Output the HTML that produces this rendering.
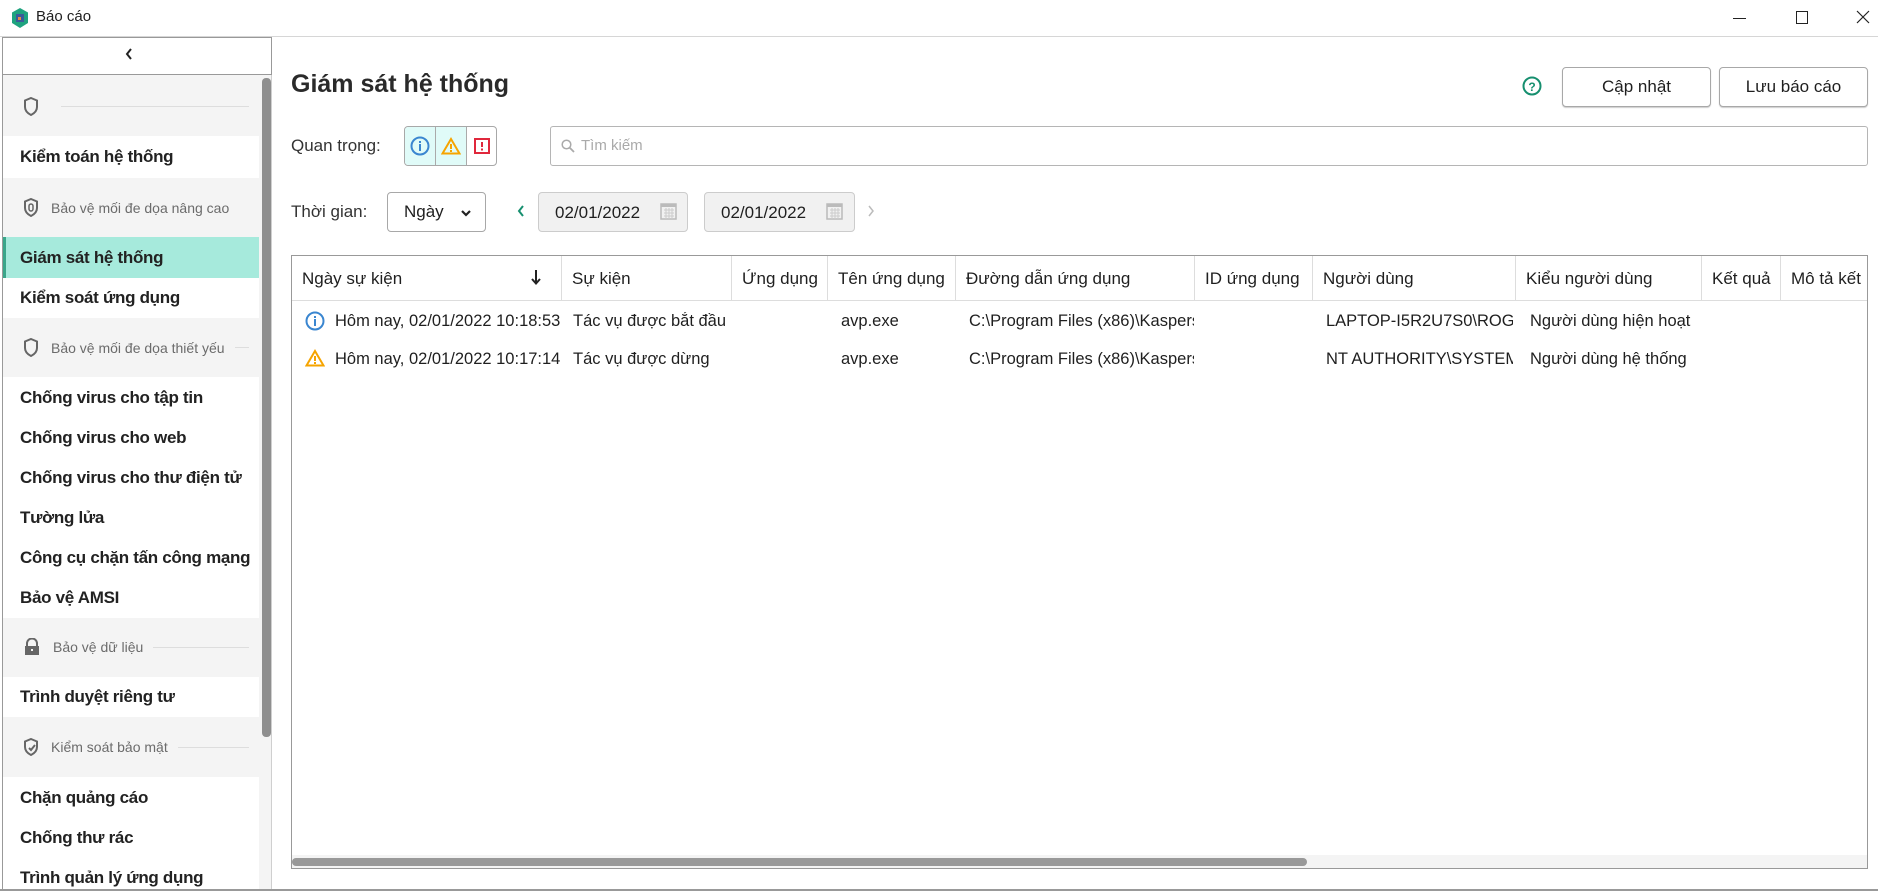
<!DOCTYPE html>
<html><head><meta charset="utf-8"><style>
*{box-sizing:border-box;margin:0;padding:0}
body{width:1878px;height:891px;overflow:hidden;background:#fff;font-family:"Liberation Sans",sans-serif;color:#1f1f1f;position:relative}
.abs{position:absolute}
.tb{left:0;top:0;width:1878px;height:37px;border-bottom:1px solid #d6d6d6;background:#fff}
.side{left:2px;top:37px;width:270px;height:852px;background:#f4f4f4;border-right:1px solid #cfcfcf;border-left:1px solid #999}
.collapse{left:2px;top:37px;width:270px;height:38px;background:#fff;border:1px solid #999}
.item{position:absolute;left:3px;width:256px;background:#fff;font-size:17px;letter-spacing:-0.3px;font-weight:bold;padding-left:17px;display:flex;align-items:center;color:#222;white-space:nowrap;overflow:hidden}
.t{position:absolute;left:20px;font-size:17px;letter-spacing:-0.3px;font-weight:bold;color:#222;white-space:nowrap;line-height:20px}
.grp{position:absolute;left:3px;width:256px;display:flex;align-items:center;padding-left:20px;font-size:14px;color:#6b6b6b;white-space:nowrap}
.grp .ln{flex:1;height:1px;background:#ddd;margin:0 10px}
.grp svg{margin-right:12px;flex:none}
.btn{position:absolute;border:1px solid #a8a8a8;border-radius:4px;background:#fff;font-size:17px;display:flex;align-items:center;justify-content:center;box-shadow:0 1px 1px #ccc}
.lbl{position:absolute;font-size:17px;color:#333}
.th{position:absolute;top:256px;height:45px;display:flex;align-items:center;font-size:17px;padding-left:10px;border-left:1px solid #ddd;white-space:nowrap;overflow:hidden}
.td{position:absolute;font-size:16.5px;white-space:nowrap;overflow:hidden}
</style></head><body>
<div class="abs tb"></div>
<svg class="abs" style="left:11px;top:8px" width="18" height="20" viewBox="0 0 18 20"><path d="M9 0L17 4.5V15L9 20L1 15V4.5Z" fill="#1fa37f"/><rect x="5" y="6" width="8" height="8" fill="#3b5b9a"/><rect x="7" y="9" width="3" height="3" fill="#e84"/></svg>
<div class="abs" style="left:36px;top:8px;font-size:15px">Báo cáo</div>
<div class="abs" style="left:1733px;top:18px;width:13px;height:1px;background:#222"></div>
<div class="abs" style="left:1796px;top:11px;width:12px;height:13px;border:1.3px solid #222"></div>
<svg class="abs" style="left:1856px;top:10px" width="14" height="14"><path d="M1 1L13 13M13 1L1 13" stroke="#222" stroke-width="1.2"/></svg>

<div class="abs side"></div>
<div class="abs collapse"></div>
<svg class="abs" style="left:124px;top:47px" width="10" height="14"><path d="M7 2L3 7L7 12" stroke="#222" stroke-width="2" fill="none"/></svg>
<div class="abs" style="left:262px;top:78px;width:9px;height:659px;background:#8f8f8f;border-radius:4px"></div>

<div class="grp" style="top:76px;height:60px"><svg width="16" height="19" viewBox="0 0 16 19"><path d="M8 1L14 3.5V10C14 14 11 16.5 8 18C5 16.5 2 14 2 10V3.5Z" fill="none" stroke="#666" stroke-width="2"/></svg><span class="ln"></span></div>
<div class="item" style="top:136px;height:42px">Kiểm toán hệ thống</div>
<div class="grp" style="top:178px;height:59px"><svg width="16" height="19" viewBox="0 0 16 19"><path d="M8 1L14 3.5V10C14 14 11 16.5 8 18C5 16.5 2 14 2 10V3.5Z" fill="none" stroke="#666" stroke-width="2"/><rect x="6" y="6" width="4" height="7" rx="2" fill="none" stroke="#666" stroke-width="1.5"/></svg>Bảo vệ mối đe dọa nâng cao</div>
<div class="item" style="top:237px;height:41px;background:#a6eadc;border-left:3px solid #3aa68a;padding-left:14px">Giám sát hệ thống</div>
<div class="item" style="top:278px;height:40px">Kiểm soát ứng dụng</div>
<div class="grp" style="top:318px;height:59px"><svg width="16" height="19" viewBox="0 0 16 19"><path d="M8 1L14 3.5V10C14 14 11 16.5 8 18C5 16.5 2 14 2 10V3.5Z" fill="none" stroke="#666" stroke-width="2"/></svg>Bảo vệ mối đe dọa thiết yếu<span class="ln"></span></div>
<div class="abs" style="left:3px;top:377px;width:256px;height:241px;background:#fff"></div>
<div class="t" style="top:388px">Chống virus cho tập tin</div>
<div class="t" style="top:428px">Chống virus cho web</div>
<div class="t" style="top:468px">Chống virus cho thư điện tử</div>
<div class="t" style="top:508px">Tường lửa</div>
<div class="t" style="top:548px">Công cụ chặn tấn công mạng</div>
<div class="t" style="top:588px">Bảo vệ AMSI</div>
<div class="grp" style="top:617px;height:60px"><svg width="18" height="18" viewBox="0 0 18 18"><path d="M4 8V5.5a5 5 0 0 1 10 0V8" fill="none" stroke="#666" stroke-width="2"/><rect x="2" y="8" width="14" height="9" fill="#666"/><rect x="8" y="11" width="2" height="2" fill="#f4f4f4"/></svg>Bảo vệ dữ liệu<span class="ln"></span></div>
<div class="item" style="top:677px;height:40px">Trình duyệt riêng tư</div>
<div class="grp" style="top:717px;height:60px"><svg width="16" height="18" viewBox="0 0 16 18"><path d="M8 1L14 3.5V9C14 13 11 15.5 8 17C5 15.5 2 13 2 9V3.5Z" fill="none" stroke="#666" stroke-width="2"/><path d="M6 10L8 12L12 7" stroke="#666" stroke-width="2" fill="none"/></svg>Kiểm soát bảo mật<span class="ln"></span></div>
<div class="abs" style="left:3px;top:777px;width:256px;height:112px;background:#fff"></div>
<div class="t" style="top:788px">Chặn quảng cáo</div>
<div class="t" style="top:828px">Chống thư rác</div>
<div class="t" style="top:868px">Trình quản lý ứng dụng</div>

<div class="abs" style="left:291px;top:70px;font-size:25px;font-weight:bold;color:#2a2a2a">Giám sát hệ thống</div>
<svg class="abs" style="left:1522px;top:76px" width="20" height="20"><circle cx="10" cy="10" r="8.5" fill="none" stroke="#168f6f" stroke-width="2"/><text x="10" y="15" font-size="12" font-weight="bold" text-anchor="middle" fill="#168f6f" font-family="Liberation Sans">?</text></svg>
<div class="btn" style="left:1562px;top:67px;width:149px;height:40px">Cập nhật</div>
<div class="btn" style="left:1719px;top:67px;width:149px;height:40px">Lưu báo cáo</div>

<div class="lbl" style="left:291px;top:136px">Quan trọng:</div>
<div class="abs" style="left:404px;top:126px;width:93px;height:40px;border:1px solid #a8a8a8;border-radius:4px;display:flex;overflow:hidden">
<div style="width:31px;background:#e0fbf8;border-right:1px solid #aaa;display:flex;align-items:center;justify-content:center"><svg width="20" height="20"><circle cx="10" cy="10" r="8.5" fill="none" stroke="#3a86d0" stroke-width="2"/><rect x="9" y="8" width="2" height="7" fill="#3a86d0"/><rect x="9" y="5" width="2" height="2" fill="#3a86d0"/></svg></div>
<div style="width:31px;background:#e0fbf8;border-right:1px solid #aaa;display:flex;align-items:center;justify-content:center"><svg width="20" height="18"><path d="M10 2L18.5 16.5H1.5Z" fill="none" stroke="#f6a400" stroke-width="2"/><rect x="9" y="7" width="2" height="5" fill="#f6a400"/><rect x="9" y="13" width="2" height="2" fill="#f6a400"/></svg></div>
<div style="flex:1;display:flex;align-items:center;justify-content:center"><svg width="16" height="16"><rect x="1" y="1" width="14" height="14" fill="none" stroke="#e0283c" stroke-width="2"/><rect x="7" y="4" width="2" height="5" fill="#e0283c"/><rect x="7" y="10.5" width="2" height="2" fill="#e0283c"/></svg></div></div>
<div class="abs" style="left:550px;top:126px;width:1318px;height:40px;border:1px solid #b5b5b5;border-radius:3px"></div>
<svg class="abs" style="left:561px;top:139px" width="14" height="14"><circle cx="5.5" cy="5.5" r="4.3" fill="none" stroke="#aaa" stroke-width="1.5"/><path d="M8.5 8.5L13 13" stroke="#aaa" stroke-width="1.8"/></svg>
<div class="abs" style="left:581px;top:137px;font-size:15px;color:#aaa">Tìm kiếm</div>

<div class="lbl" style="left:291px;top:202px">Thời gian:</div>
<div class="btn" style="left:387px;top:192px;width:99px;height:40px;justify-content:flex-start;padding-left:16px;box-shadow:none">Ngày<svg style="position:absolute;right:14px;top:16px" width="10" height="8"><path d="M1 2L5 6L9 2" stroke="#222" stroke-width="2.2" fill="none"/></svg></div>
<svg class="abs" style="left:516px;top:204px" width="10" height="14"><path d="M7 2L3 7L7 12" stroke="#168f6f" stroke-width="2" fill="none"/></svg>
<div class="abs" style="left:538px;top:192px;width:150px;height:40px;background:#f1f1f1;border:1px solid #ccc;border-radius:4px;font-size:17px;padding:10px 0 0 16px">02/01/2022</div>
<div class="abs" style="left:704px;top:192px;width:151px;height:40px;background:#f1f1f1;border:1px solid #ccc;border-radius:4px;font-size:17px;padding:10px 0 0 16px">02/01/2022</div>
<svg class="abs" style="left:660px;top:201px" width="17" height="19"><rect x="1" y="3" width="15" height="15" fill="none" stroke="#bbb" stroke-width="1.5"/><rect x="1" y="3" width="15" height="3" fill="#bbb"/><path d="M4 9h10M4 12h10M4 15h10M6 7v11M9 7v11M12 7v11" stroke="#ccc"/></svg>
<svg class="abs" style="left:826px;top:201px" width="17" height="19"><rect x="1" y="3" width="15" height="15" fill="none" stroke="#bbb" stroke-width="1.5"/><rect x="1" y="3" width="15" height="3" fill="#bbb"/><path d="M4 9h10M4 12h10M4 15h10M6 7v11M9 7v11M12 7v11" stroke="#ccc"/></svg>
<svg class="abs" style="left:866px;top:204px" width="10" height="14"><path d="M3 2L7 7L3 12" stroke="#bbb" stroke-width="1.5" fill="none"/></svg>

<div class="abs" style="left:291px;top:255px;width:1577px;height:614px;border:1px solid #999"></div>
<div class="abs" style="left:292px;top:300px;width:1575px;height:1px;background:#ddd"></div>
<div class="th" style="left:292px;width:269px;border-left:none">Ngày sự kiện<svg style="position:absolute;right:20px;top:13px" width="10" height="16"><path d="M5 1V14M1 10L5 14.5L9 10" stroke="#222" stroke-width="2" fill="none"/></svg></div>
<div class="th" style="left:561px;width:170px">Sự kiện</div>
<div class="th" style="left:731px;width:96px">Ứng dụng</div>
<div class="th" style="left:827px;width:128px">Tên ứng dụng</div>
<div class="th" style="left:955px;width:239px">Đường dẫn ứng dụng</div>
<div class="th" style="left:1194px;width:118px">ID ứng dụng</div>
<div class="th" style="left:1312px;width:203px">Người dùng</div>
<div class="th" style="left:1515px;width:186px">Kiểu người dùng</div>
<div class="th" style="left:1701px;width:79px">Kết quả</div>
<div class="th" style="left:1780px;width:87px">Mô tả kết</div>

<svg class="abs" style="left:305px;top:311px" width="20" height="20"><circle cx="10" cy="10" r="8.5" fill="none" stroke="#3a86d0" stroke-width="2"/><rect x="9" y="8" width="2" height="7" fill="#3a86d0"/><rect x="9" y="5" width="2" height="2" fill="#3a86d0"/></svg>
<svg class="abs" style="left:305px;top:349px" width="20" height="18"><path d="M10 2L18.5 16.5H1.5Z" fill="none" stroke="#f6a400" stroke-width="2"/><rect x="9" y="7" width="2" height="5" fill="#f6a400"/><rect x="9" y="13" width="2" height="2" fill="#f6a400"/></svg>
<div class="td" style="left:335px;top:312px;width:226px">Hôm nay, 02/01/2022 10:18:53</div>
<div class="td" style="left:335px;top:350px;width:226px">Hôm nay, 02/01/2022 10:17:14</div>
<div class="td" style="left:573px;top:312px">Tác vụ được bắt đầu</div>
<div class="td" style="left:573px;top:350px">Tác vụ được dừng</div>
<div class="td" style="left:841px;top:312px">avp.exe</div>
<div class="td" style="left:841px;top:350px">avp.exe</div>
<div class="td" style="left:969px;top:312px;width:225px">C:\Program Files (x86)\Kaspersky</div>
<div class="td" style="left:969px;top:350px;width:225px">C:\Program Files (x86)\Kaspersky</div>
<div class="td" style="left:1326px;top:312px;width:187px">LAPTOP-I5R2U7S0\ROG</div>
<div class="td" style="left:1326px;top:350px;width:187px">NT AUTHORITY\SYSTEM</div>
<div class="td" style="left:1530px;top:312px;width:171px">Người dùng hiện hoạt</div>
<div class="td" style="left:1530px;top:350px;width:171px">Người dùng hệ thống</div>

<div class="abs" style="left:292px;top:855px;width:1575px;height:13px;background:#f4f4f4"></div>
<div class="abs" style="left:292px;top:858px;width:1015px;height:8px;background:#999;border-radius:4px"></div>
<div class="abs" style="left:0;top:889px;width:1878px;height:2px;background:#999"></div>
</body></html>
